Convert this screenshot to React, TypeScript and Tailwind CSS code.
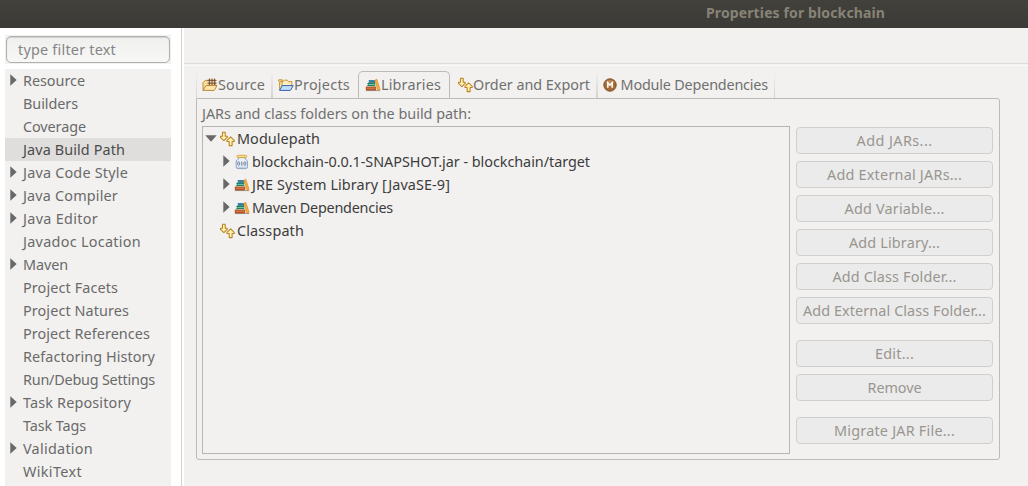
import { useLayoutEffect, useRef, useState } from "react";
import type { ReactNode } from "react";

/** A one-line label whose tracking is adjusted to fill the given width. */
function Label({ text, width, className = "" }: { text: string; width: number; className?: string }) {
  const ref = useRef<HTMLSpanElement>(null);
  const [spacing, setSpacing] = useState(0);
  useLayoutEffect(() => {
    if (!ref.current) return;
    ref.current.style.letterSpacing = "0px";
    const natural = ref.current.getBoundingClientRect().width;
    const next = (width - natural) / text.length;
    ref.current.style.letterSpacing = `${next}px`;
    setSpacing(next);
  }, [text, width]);
  return (
    <span ref={ref} className={`inline-block whitespace-pre ${className}`} style={{ letterSpacing: `${spacing}px` }}>
      {text}
    </span>
  );
}

function Collapsed() {
  return (
    <svg className="block h-[12px] w-[7px]" viewBox="0 0 7 12">
      <path d="M0.3 0.3 L6.7 6 L0.3 11.7 Z" fill="#686868" />
    </svg>
  );
}

function Expanded() {
  return (
    <svg className="block h-[7px] w-[12px]" viewBox="0 0 12 7">
      <path d="M0.3 0.3 H11.7 L6 6.7 Z" fill="#686868" />
    </svg>
  );
}

function OrderIcon() {
  return (
    <svg className="block h-4 w-4 shrink-0" viewBox="0 0 16 16" fill="#fff2b8" stroke="#bd8420" strokeWidth="1.1" strokeLinejoin="round">
      <path d="M3.5 1.2 H6.2 V5.2 H8.2 V6.4 L4.9 9.6 L1.5 6.4 V5.2 H3.5 Z" />
      <path d="M11.6 5.8 L15.2 9.3 V10.5 H13.1 V14.6 H10.2 V10.5 H8 V9.3 Z" />
    </svg>
  );
}

function LibraryIcon() {
  return (
    <svg className="block h-4 w-4 shrink-0" viewBox="0 0 16 16">
      <path d="M3.4 3 H10.2 V5.6 H3.4 L4.2 4.3 Z" fill="#3585a8" />
      <path d="M3.4 5.3 H10.2" stroke="#1f5875" strokeWidth="0.7" />
      <path d="M2 6 H10.2 V9 H2 L3 7.5 Z" fill="#198563" />
      <path d="M3.5 7.5 H9.8" stroke="#8ed0ae" strokeWidth="0.8" />
      <rect x="0.8" y="9.6" width="10.4" height="3.8" rx="0.5" fill="#b45325" />
      <path d="M1.8 11.2 H10.4" stroke="#e39562" strokeWidth="0.8" />
      <path d="M9.8 3.2 L11.8 2.2 L15.2 12.6 L13 13.4 Z" fill="#f3ad3b" stroke="#da8a22" strokeWidth="0.6" />
      <path d="M1 13.6 H15.2" stroke="#73584a" strokeWidth="0.5" />
    </svg>
  );
}

function JarIcon() {
  return (
    <svg className="block h-4 w-4 shrink-0" viewBox="0 0 16 16">
      <path d="M4.5 3.4 H11.2 V5 L13.4 6.8 V13 Q13.4 14.6 11.8 14.6 H3.8 Q2.2 14.6 2.2 13 V6.8 L4.5 5 Z" fill="#e8f0fa" stroke="#8499b9" strokeWidth="0.9" />
      <rect x="2.9" y="1.3" width="9.8" height="2.3" rx="1" fill="#fbe28e" stroke="#cf9b30" strokeWidth="0.8" />
      <rect x="3.7" y="7.9" width="1.9" height="3.3" rx="0.7" fill="none" stroke="#5a6b87" strokeWidth="0.8" />
      <path d="M7.8 7.5 V11.6" stroke="#5a6b87" strokeWidth="0.9" />
      <rect x="9.9" y="7.9" width="1.9" height="3.3" rx="0.7" fill="none" stroke="#5a6b87" strokeWidth="0.8" />
      <path d="M3.2 13.2 H12.4" stroke="#b0c5e2" strokeWidth="1" />
    </svg>
  );
}

function SourceIcon() {
  return (
    <svg className="block h-4 w-4 shrink-0" viewBox="0 0 16 16" strokeLinejoin="round">
      <path d="M1 13.2 V5.6 L3.2 3.4 H6 L7 4.8 H13.6 V9" fill="#f7dc9b" stroke="#c48a38" />
      <rect x="6" y="2" width="7.5" height="6" fill="#efd2a5" />
      <path d="M5.5 3.4 H14.5 M5.5 6.2 H14.5 M7.4 1.5 V8.4 M10 1.5 V8.4 M12.6 1.5 V8.4" stroke="#6a4630" strokeWidth="0.9" />
      <path d="M1 13.4 L4 8.6 H15 L12.2 13.4 Z" fill="#fde8b0" stroke="#c08432" />
    </svg>
  );
}

function ProjectsIcon() {
  return (
    <svg className="block h-4 w-4 shrink-0" viewBox="0 0 16 16" strokeLinejoin="round">
      <path d="M0.6 4.3 V2.8 H4.3 V4.3 M1.6 13 V4.6 H5.6 V10" fill="#f8e2a6" stroke="#c69439" />
      <path d="M4 10 V5.4 L6.4 3.2 H9.4 L10.4 4.6 H13.8 V9" fill="#fbebbd" stroke="#c69439" />
      <path d="M1.6 13.4 L4.2 8.6 H15.2 L12.4 13.4 Z" fill="#c2defb" stroke="#3463b4" />
    </svg>
  );
}

function ModuleIcon() {
  return (
    <svg className="block h-[14px] w-[14px] shrink-0" viewBox="0 0 14 14">
      <circle cx="7" cy="7" r="6.2" fill="#a36b35" stroke="#805126" />
      <path d="M2 5 Q7 -1 12 5" fill="#c79b6d" opacity="0.65" />
      <path d="M4.8 9.8 V4.8 L7 7 L9.2 4.8 V9.8" fill="none" stroke="#fffaf2" strokeWidth="1.7" />
    </svg>
  );
}

const pages: { name: string; width: number; branch?: boolean; selected?: boolean }[] = [
  { name: "Resource", width: 62, branch: true },
  { name: "Builders", width: 55 },
  { name: "Coverage", width: 63 },
  { name: "Java Build Path", width: 102, selected: true },
  { name: "Java Code Style", width: 105, branch: true },
  { name: "Java Compiler", width: 95, branch: true },
  { name: "Java Editor", width: 75, branch: true },
  { name: "Javadoc Location", width: 118 },
  { name: "Maven", width: 45, branch: true },
  { name: "Project Facets", width: 95 },
  { name: "Project Natures", width: 106 },
  { name: "Project References", width: 127 },
  { name: "Refactoring History", width: 132 },
  { name: "Run/Debug Settings", width: 132 },
  { name: "Task Repository", width: 108, branch: true },
  { name: "Task Tags", width: 63 },
  { name: "Validation", width: 70, branch: true },
  { name: "WikiText", width: 59 },
];

const actions = [
  { name: "Add JARs...", width: 76, gap: "mt-0" },
  { name: "Add External JARs...", width: 135, gap: "mt-[7px]" },
  { name: "Add Variable...", width: 100, gap: "mt-[7px]" },
  { name: "Add Library...", width: 91, gap: "mt-[7px]" },
  { name: "Add Class Folder...", width: 124, gap: "mt-[7px]" },
  { name: "Add External Class Folder...", width: 183, gap: "mt-[7px]" },
  { name: "Edit...", width: 39, gap: "mt-4" },
  { name: "Remove", width: 54, gap: "mt-[7px]" },
  { name: "Migrate JAR File...", width: 121, gap: "mt-4" },
];

function Sidebar() {
  return (
    <aside className="flex w-[184px] shrink-0 flex-col border-r-2 border-white bg-white">
      <div className="flex h-full w-[182px] flex-col border-r border-[#d4d2d0] pt-[7px] pl-[5px]">
        <div className="h-[29px] w-[166px] shrink-0 bg-[#f2f1f0] p-px">
          <div className="flex h-[27px] items-center rounded-[5px] border border-[#b0afad] bg-gradient-to-b from-[#efefee] to-[#f8f8f7] pl-[11px] text-[#858585] shadow-[inset_0_1px_1px_#d0d0d0]">
            <Label text="type filter text" width={98} />
          </div>
        </div>
        <div className="mt-[5px] w-[166px] flex-1 bg-[#f2f1f0] text-[#6a6a69]">
          {pages.map((page) => (
            <div key={page.name} className={`flex h-[23px] items-center pl-[5px] ${page.selected ? "bg-[#dfdedd] text-[#4c4c4c]" : ""}`}>
              <span className="w-[13px] shrink-0 pb-px">{page.branch && <Collapsed />}</span>
              <Label text={page.name} width={page.width} />
            </div>
          ))}
        </div>
      </div>
    </aside>
  );
}

function Tab({ icon, text, width, className }: { icon: ReactNode; text: string; width: number; className: string }) {
  return (
    <div className={`flex h-[27px] shrink-0 items-center ${className}`}>
      {icon}
      <Label text={text} width={width} />
    </div>
  );
}

function Divider({ className }: { className: string }) {
  return <i className={`block h-[27px] shrink-0 bg-gradient-to-b from-[#f2f1f0] to-[#d4d3d1] ${className}`} />;
}

function TreeRow({ icon, text, width, child, state }: { icon: ReactNode; text: string; width: number; child?: boolean; state?: ReactNode }) {
  return (
    <div className={`flex h-[23px] items-center ${child ? "pl-5" : "pl-[2px]"}`}>
      <span className={`shrink-0 pb-px ${child ? "w-[11px]" : "w-[14px]"}`}>{state}</span>
      {icon}
      <span className="pl-[2px]">
        <Label text={text} width={width} />
      </span>
    </div>
  );
}

export default function App() {
  return (
    <div className="flex h-[486px] w-[1028px] flex-col overflow-hidden bg-[#f2f1f0] font-['Noto_Sans',sans-serif] text-[14.4px] leading-[22px] text-[#70706f]">
      <header className="flex h-7 shrink-0 items-center bg-gradient-to-b from-[#42413c] to-[#3b3a36] pb-[2px] pl-[706px] text-[14px] font-bold text-[#878376]">
        <Label text="Properties for blockchain" width={179} />
      </header>
      <div className="flex min-h-0 flex-1">
        <Sidebar />
        <main className="flex flex-1 flex-col">
          <div className="h-9 shrink-0 border-b border-[#dcdbd9]" />
          <div className="mt-px h-px shrink-0 bg-[#fafafa]" />
          <div className="mt-[5px] flex h-[27px] shrink-0 pl-3">
            <Divider className="w-px" />
            <Tab icon={<SourceIcon />} text="Source" width={47} className="w-[74px] pl-[5px]" />
            <Divider className="w-[2px]" />
            <Tab icon={<ProjectsIcon />} text="Projects" width={56} className="w-[85px] pl-[5px]" />
            <Tab icon={<LibraryIcon />} text="Libraries" width={60} className="w-[92px] rounded-t-[5px] border border-b-0 border-[#bdbbb9] pl-[6px]" />
            <Tab icon={<OrderIcon />} text="Order and Export" width={117} className="w-[146px] pl-[7px]" />
            <Divider className="w-[2px]" />
            <Tab icon={<ModuleIcon />} text=" Module Dependencies" width={151} className="w-[176px] pl-[5px]" />
            <Divider className="w-px" />
          </div>
          <section className="ml-3 flex h-[362px] w-[804px] shrink-0 flex-col rounded-[3px] rounded-tl-none border border-[#bdbbb9] pl-[5px]">
            <div className="flex h-[27px] shrink-0 items-center pt-[2px]">
              <Label text="JARs and class folders on the build path:" width={269} />
            </div>
            <div className="flex">
              <div className="h-[328px] w-[588px] shrink-0 border border-[#b7b5b3] text-[#3c3c3c]">
                <TreeRow icon={<OrderIcon />} text="Modulepath" width={83} state={<Expanded />} />
                <TreeRow child icon={<JarIcon />} text="blockchain-0.0.1-SNAPSHOT.jar - blockchain/target" width={338} state={<Collapsed />} />
                <TreeRow child icon={<LibraryIcon />} text="JRE System Library [JavaSE-9]" width={198} state={<Collapsed />} />
                <TreeRow child icon={<LibraryIcon />} text="Maven Dependencies" width={141} state={<Collapsed />} />
                <TreeRow icon={<OrderIcon />} text="Classpath" width={67} />
              </div>
              <div className="ml-[6px] flex w-[197px] flex-col pt-px">
                {actions.map((action) => (
                  <button key={action.name} disabled className={`flex h-[27px] shrink-0 items-center justify-center rounded-[4px] border border-[#d0cfcd] bg-[#ebebeb] text-[#99958f] ${action.gap}`}>
                    <Label text={action.name} width={action.width} />
                  </button>
                ))}
              </div>
            </div>
          </section>
        </main>
      </div>
    </div>
  );
}
